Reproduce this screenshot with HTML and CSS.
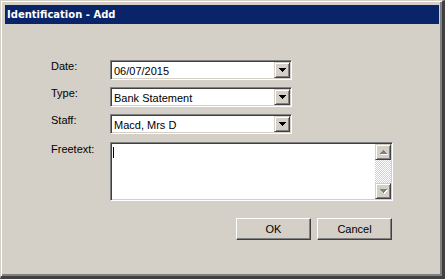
FILE: index.html
```html
<!DOCTYPE html>
<html lang="en">
<head>
  <meta charset="UTF-8">
  <meta name="viewport" content="width=device-width, initial-scale=1.0">
  <link rel="stylesheet" href="styles.css">
  <title>Identification - Add</title>
</head>
<body>
  <div class="window">
    <div class="titlebar">Identification - Add</div>
    <div class="content">
      <div class="form">
        <label class="label">Date:</label>
        <div class="combo">
          <span class="combo-text">06/07/2015</span>
          <span class="drop-btn"><svg width="7" height="4" viewBox="0 0 7 4" shape-rendering="crispEdges"><path d="M0 0h7v1h-1v1h-1v1h-1v1h-1v-1h-1v-1h-1v-1h-1z" fill="#000"/></svg></span>
        </div>

        <label class="label">Type:</label>
        <div class="combo">
          <span class="combo-text">Bank Statement</span>
          <span class="drop-btn"><svg width="7" height="4" viewBox="0 0 7 4" shape-rendering="crispEdges"><path d="M0 0h7v1h-1v1h-1v1h-1v1h-1v-1h-1v-1h-1v-1h-1z" fill="#000"/></svg></span>
        </div>

        <label class="label">Staff:</label>
        <div class="combo">
          <span class="combo-text">Macd, Mrs D</span>
          <span class="drop-btn"><svg width="7" height="4" viewBox="0 0 7 4" shape-rendering="crispEdges"><path d="M0 0h7v1h-1v1h-1v1h-1v1h-1v-1h-1v-1h-1v-1h-1z" fill="#000"/></svg></span>
        </div>

        <label class="label label-free">Freetext:</label>
        <div class="memo">
          <div class="memo-text"><span class="caret"></span></div>
          <div class="scrollbar">
            <span class="scroll-btn"><svg width="8" height="5" viewBox="0 0 8 5" shape-rendering="crispEdges"><path transform="translate(1 1)" d="M3 0h1v1h1v1h1v1h1v1h-7v-1h1v-1h1v-1h1z" fill="#fff"/><path d="M3 0h1v1h1v1h1v1h1v1h-7v-1h1v-1h1v-1h1z" fill="#808080"/></svg></span>
            <span class="scroll-track"></span>
            <span class="scroll-btn"><svg width="8" height="5" viewBox="0 0 8 5" shape-rendering="crispEdges"><path transform="translate(1 1)" d="M0 0h7v1h-1v1h-1v1h-1v1h-1v-1h-1v-1h-1v-1h-1z" fill="#fff"/><path d="M0 0h7v1h-1v1h-1v1h-1v1h-1v-1h-1v-1h-1v-1h-1z" fill="#808080"/></svg></span>
          </div>
        </div>
      </div>

      <div class="actions">
        <button class="btn">OK</button>
        <button class="btn">Cancel</button>
      </div>
    </div>
  </div>
</body>
</html>
```

FILE: styles.css
```css
*, *::before, *::after {
  margin: 0;
  padding: 0;
  box-sizing: border-box;
}

body {
  background: #d4d0c8;
  font-family: "Liberation Sans", Arial, sans-serif;
  font-size: 11px;
  color: #000;
}

.window {
  width: 445px;
  height: 279px;
  background: #d4d0c8;
  border-style: solid;
  border-width: 1px 3px 3px 1px;
  border-color: #d4d0c8 #404040 #404040 #d4d0c8;
  box-shadow: inset 1px 1px #fff, inset -2px -2px #808080;
  padding: 4px 3px 0 4px;
}

.titlebar {
  height: 19px;
  line-height: 19px;
  padding-left: 2px;
  background: #0a246a;
  color: #fff;
  font-family: "DejaVu Sans", Verdana, sans-serif;
  font-weight: bold;
  font-size: 10px;
}

.content {
  padding: 36px 0 0 46px;
}

.form {
  display: grid;
  grid-template-columns: 59px auto;
  row-gap: 7px;
  justify-items: start;
}

.label {
  line-height: 13px;
}

.label-free {
  padding-top: 2px;
}

/* sunken 3d field */
.combo,
.memo {
  display: flex;
  background: #fff;
  border: 1px solid;
  border-color: #808080 #fff #fff #808080;
  padding: 1px;
  box-shadow: inset 1px 1px #404040, inset -1px -1px #d4d0c8;
}

.combo {
  width: 182px;
  height: 20px;
}

.combo-text {
  flex: 1;
  line-height: 14px;
  padding: 2px 0 0 2px;
}

/* raised 3d button */
.drop-btn,
.scroll-btn {
  width: 16px;
  height: 16px;
  display: flex;
  align-items: center;
  justify-content: center;
  background: #d4d0c8;
  border: 1px solid;
  border-color: #d4d0c8 #404040 #404040 #d4d0c8;
  box-shadow: inset 1px 1px #fff, inset -1px -1px #808080;
}

.drop-btn svg {
  display: block;
}

.scroll-btn svg {
  display: block;
  margin: 0 0 0 1px;
}

.memo {
  width: 283px;
  height: 59px;
  margin-top: 1px;
}

.memo-text {
  flex: 1;
  padding: 3px 0 0 1px;
}

.caret {
  display: block;
  width: 1px;
  height: 11px;
  background: #000;
}

.scrollbar {
  width: 16px;
  display: flex;
  flex-direction: column;
}

.scroll-track {
  flex: 1;
  background: repeating-conic-gradient(#fff 0 25%, #d4d0c8 0 50%) 0 0 / 2px 2px;
}

.actions {
  display: flex;
  justify-content: flex-end;
  gap: 6px;
  width: 341px;
  margin-top: 17px;
}

.btn {
  width: 75px;
  height: 22px;
  background: #d4d0c8;
  border: 1px solid;
  border-color: #fff #404040 #404040 #fff;
  box-shadow: inset -1px -1px #808080;
  font-family: "Liberation Sans", Arial, sans-serif;
  font-size: 11px;
  color: #000;
}
```
